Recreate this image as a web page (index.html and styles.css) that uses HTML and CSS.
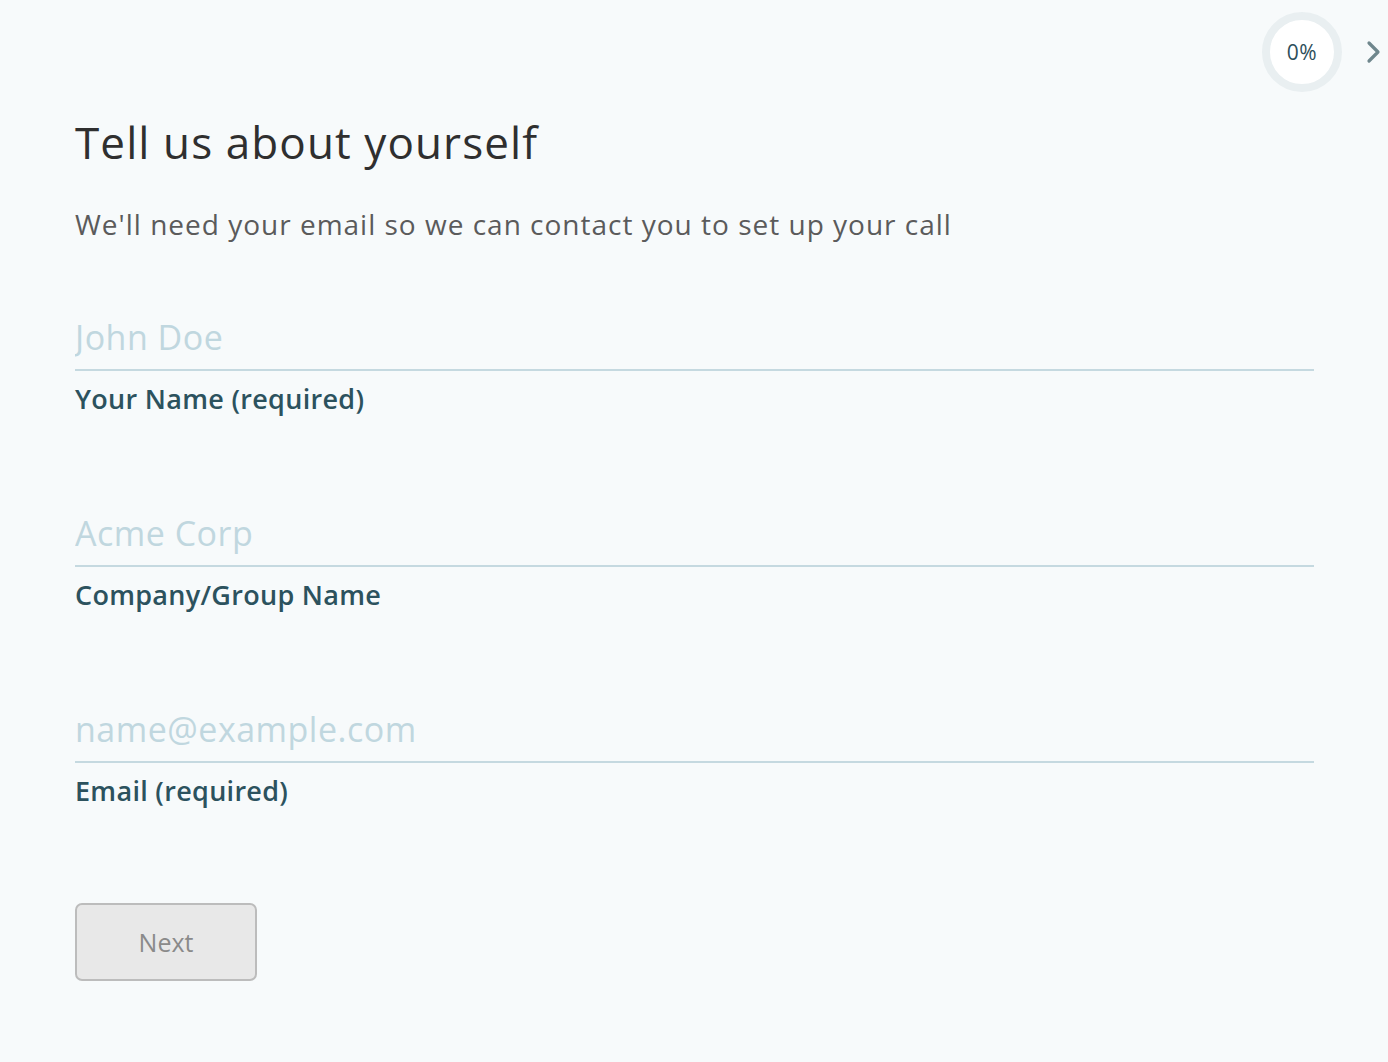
FILE: index.html
```html
<!DOCTYPE html>
<html lang="en">
<head>
<meta charset="utf-8">
<title>Tell us about yourself</title>
<link rel="stylesheet" href="styles.css">
</head>
<body>
<div class="page">
  <div class="progress">
    <div class="ring"><span>0%</span></div>
    <svg class="chev" width="16" height="24" viewBox="0 0 16 24"><path d="M3 3 L12 12 L3 21" fill="none" stroke="#6f878d" stroke-width="3.2" stroke-linecap="round" stroke-linejoin="round"/></svg>
  </div>
  <main class="form">
    <h1 class="title">Tell us about yourself</h1>
    <p class="subtitle">We'll need your email so we can contact you to set up your call</p>
    <div class="field">
      <input class="input" type="text" placeholder="John Doe">
      <label class="label">Your Name (required)</label>
    </div>
    <div class="field">
      <input class="input" type="text" placeholder="Acme Corp">
      <label class="label">Company/Group Name</label>
    </div>
    <div class="field">
      <input class="input" type="email" placeholder="name@example.com">
      <label class="label">Email (required)</label>
    </div>
    <button class="next" type="button">Next</button>
  </main>
</div>
</body>
</html>
```
FILE: styles.css
```css
html, body {
  margin: 0;
  padding: 0;
  background: #f7fafb;
}
body {
  font-family: "Open Sans", "Noto Sans", sans-serif;
  color: #333;
}
.page {
  position: relative;
  min-height: 1062px;
}
.progress {
  position: absolute;
  top: 12px;
  right: 6px;
  display: flex;
  align-items: center;
  gap: 24px;
}
.ring {
  width: 64px;
  height: 64px;
  border-radius: 50%;
  border: 8px solid #e9eff1;
  background: #fff;
  display: flex;
  align-items: center;
  justify-content: center;
}
.ring span {
  font-size: 21px;
  color: #2d4e5a;
  letter-spacing: 0.5px;
}
.chev {
  display: block;
}
.form {
  padding: 112px 74px 0 75px;
}
.title {
  margin: 0;
  font-weight: 400;
  font-size: 44px;
  line-height: 60px;
  color: #2f2f2f;
  letter-spacing: 1.1px;
}
.subtitle {
  margin: 35px 0 0 0;
  font-size: 28px;
  line-height: 34px;
  color: #5b5b5b;
  letter-spacing: 1px;
}
.field {
  display: flex;
  flex-direction: column;
  margin-top: 64px;
}
.field + .field {
  margin-top: 82px;
}
.input {
  font-family: inherit;
  font-size: 34px;
  line-height: 44px;
  padding: 10px 0;
  border: 0;
  border-bottom: 2px solid #c5d9e0;
  background: transparent;
  outline: none;
  color: #333;
  letter-spacing: 0.5px;
}
.input::placeholder {
  color: #c0d7df;
}
.label {
  margin-top: 8px;
  font-size: 27px;
  line-height: 40px;
  font-weight: 600;
  color: #2c525e;
  letter-spacing: 0.3px;
}
.next {
  margin-top: 92px;
  width: 182px;
  height: 78px;
  border: 2px solid #bcbcbc;
  border-radius: 7px;
  background: #e8e8e8;
  color: #8a8a8a;
  font-family: inherit;
  font-size: 25px;
}
```
